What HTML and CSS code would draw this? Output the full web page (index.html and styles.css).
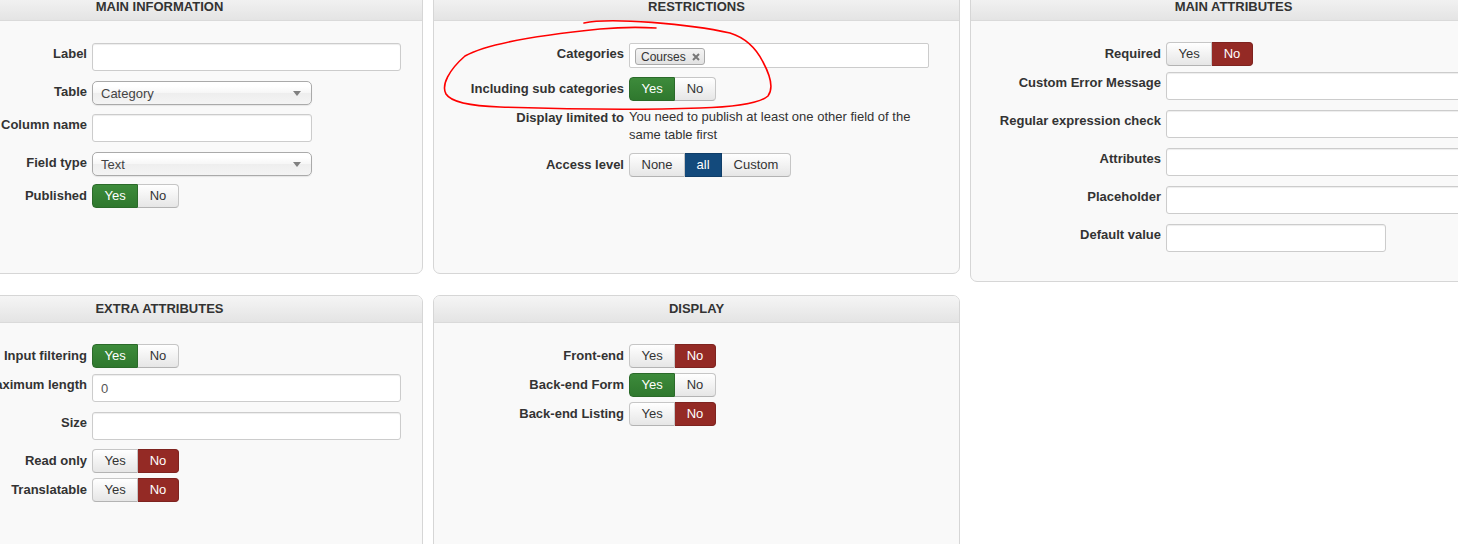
FILE: index.html
```html
<!DOCTYPE html>
<html lang="en">
<head>
    <meta charset="UTF-8">
    <meta name="viewport" content="width=device-width, initial-scale=1.0">
    <title>Field Settings</title>
    <link rel="stylesheet" href="styles.css">
</head>
<body>
    <div class="page">
        <section class="panel">
            <h2 class="panel-head">MAIN INFORMATION</h2>
            <div class="panel-body">
                <div class="row"><label>Label</label><input type="text" class="input-wide"></div>
                <div class="row"><label>Table</label><div class="select"><span>Category</span><i class="caret"></i></div></div>
                <div class="row"><label>Column name</label><input type="text"></div>
                <div class="row"><label>Field type</label><div class="select"><span>Text</span><i class="caret"></i></div></div>
                <div class="row"><label>Published</label><div class="toggle"><span class="yes-on">Yes</span><span>No</span></div></div>
            </div>
        </section>

        <section class="panel">
            <h2 class="panel-head">RESTRICTIONS</h2>
            <div class="panel-body">
                <div class="row">
                    <label>Categories</label>
                    <div class="tags">
                        <span class="tag">Courses
                            <svg class="tag-x" width="8" height="8" viewBox="0 0 8 8"><path d="M1 1L7 7M7 1L1 7"/></svg>
                        </span>
                    </div>
                </div>
                <div class="row"><label>Including sub categories</label><div class="toggle"><span class="yes-on">Yes</span><span>No</span></div></div>
                <div class="row"><label>Display limited to</label><p class="help">You need to publish at least one other field of the same table first</p></div>
                <div class="row"><label>Access level</label><div class="toggle"><span>None</span><span class="pick-on">all</span><span>Custom</span></div></div>
            </div>
            <!-- hand drawn marker around the two first rows -->
            <svg class="marker" viewBox="0 0 527 140">
                <g transform="translate(-433 7)">
                    <path d="M584 23 C 610 17, 690 24, 730 33 C 746 38, 757 50, 763 62 C 770 75, 774 88, 768 96 C 759 104, 735 107, 700 108 C 640 110, 560 109, 500 107 C 470 106, 451 102, 446 94 C 441 85, 449 70, 465 56 C 488 43, 540 35, 600 29 C 622 27, 640 27, 656 28"/>
                </g>
            </svg>
        </section>

        <section class="panel">
            <h2 class="panel-head">MAIN ATTRIBUTES</h2>
            <div class="panel-body">
                <div class="row"><label>Required</label><div class="toggle"><span>Yes</span><span class="no-on">No</span></div></div>
                <div class="row"><label>Custom Error Message</label><input type="text" class="input-long"></div>
                <div class="row"><label>Regular expression check</label><input type="text" class="input-long"></div>
                <div class="row"><label>Attributes</label><input type="text" class="input-long"></div>
                <div class="row"><label>Placeholder</label><input type="text" class="input-long"></div>
                <div class="row"><label>Default value</label><input type="text"></div>
            </div>
        </section>

        <section class="panel">
            <h2 class="panel-head">EXTRA ATTRIBUTES</h2>
            <div class="panel-body">
                <div class="row"><label>Input filtering</label><div class="toggle"><span class="yes-on">Yes</span><span>No</span></div></div>
                <div class="row"><label>Maximum length</label><input type="text" class="input-wide" value="0"></div>
                <div class="row"><label>Size</label><input type="text" class="input-wide"></div>
                <div class="row"><label>Read only</label><div class="toggle"><span>Yes</span><span class="no-on">No</span></div></div>
                <div class="row"><label>Translatable</label><div class="toggle"><span>Yes</span><span class="no-on">No</span></div></div>
            </div>
        </section>

        <section class="panel">
            <h2 class="panel-head">DISPLAY</h2>
            <div class="panel-body">
                <div class="row"><label>Front-end</label><div class="toggle"><span>Yes</span><span class="no-on">No</span></div></div>
                <div class="row"><label>Back-end Form</label><div class="toggle"><span class="yes-on">Yes</span><span>No</span></div></div>
                <div class="row"><label>Back-end Listing</label><div class="toggle"><span>Yes</span><span class="no-on">No</span></div></div>
            </div>
        </section>
    </div>
</body>
</html>
```

FILE: styles.css
```css
* {
    box-sizing: border-box;
}
html, body {
    overflow: hidden;
}
body {
    margin: 0;
    background-color: #fff;
    color: #333;
    font-family: "Liberation Sans", Arial, sans-serif;
    font-size: 13px;
}
/* page is scrolled a bit, so the first column is cut off */
.page {
    display: grid;
    grid-template-columns: repeat(3, 527px);
    column-gap: 10px;
    row-gap: 13px;
    align-items: start;
    margin: -7px 0 0 -104px;
}
.panel {
    position: relative;
    min-height: 281px;
    background-color: #f9f9f9;
    border: 1px solid #d6d6d6;
    border-radius: 7px;
}
.panel-head {
    margin: 0;
    height: 27px;
    line-height: 26px;
    text-align: center;
    font-size: 13px;
    font-weight: bold;
    color: #333;
    background: linear-gradient(#f5f5f5, #e4e4e4);
    border-bottom: 1px solid #dadada;
    border-radius: 6px 6px 0 0;
}
.panel-body {
    padding: 21px 0 20px;
}
.row {
    display: flex;
    align-items: flex-start;
    gap: 5px;
    margin-bottom: 5px;
}
.row > label {
    flex: 0 0 190px;
    padding-top: 3px;
    line-height: 18px;
    text-align: right;
    font-weight: bold;
    white-space: nowrap;
}
input[type="text"] {
    width: 220px;
    height: 28px;
    margin: 1px 0 4px;
    padding: 4px 8px;
    border: 1px solid #ccc;
    border-radius: 3px;
    background-color: #fff;
    box-shadow: inset 0 1px 1px rgba(0, 0, 0, 0.075);
    font: 13px "Liberation Sans", Arial, sans-serif;
    color: #555;
}
.input-wide {
    width: 309px !important;
}
.input-long {
    width: 320px !important;
}
.select {
    display: flex;
    align-items: center;
    width: 220px;
    height: 24px;
    margin: 1px 0 3px;
    padding: 0 8px;
    border: 1px solid #aaa;
    border-radius: 5px;
    background: linear-gradient(#fff 20%, #f6f6f6 50%, #eee 52%, #f4f4f4 100%);
    box-shadow: 0 1px 1px rgba(0, 0, 0, 0.08);
    color: #444;
}
.caret {
    margin-left: auto;
    margin-right: 2px;
    border-left: 4px solid transparent;
    border-right: 4px solid transparent;
    border-top: 5px solid #808080;
}
.tags {
    width: 300px;
    height: 25px;
    margin: 1px 0 4px;
    padding: 4px 5px;
    border: 1px solid #ccc;
    border-radius: 2px;
    background-color: #fff;
}
.tag {
    display: inline-flex;
    align-items: center;
    gap: 6px;
    height: 17px;
    padding: 0 4px 0 5px;
    border: 1px solid #aaa;
    border-radius: 3px;
    background: linear-gradient(#f4f4f4, #e2e2e2);
    font-size: 12px;
    color: #333;
}
.tag-x path {
    stroke: #777;
    stroke-width: 2;
    fill: none;
}
.help {
    width: 300px;
    margin: 0;
    padding: 2px 0 4px;
    line-height: 18px;
}
.toggle {
    display: flex;
}
.toggle span {
    height: 24px;
    line-height: 22px;
    padding: 0 11.5px;
    border: 1px solid #c6c6c6;
    border-bottom-color: #b3b3b3;
    background: linear-gradient(#fff, #e6e6e6);
    color: #333;
}
.toggle span + span {
    border-left: none;
}
.toggle span:first-child {
    border-radius: 4px 0 0 4px;
}
.toggle span:last-child {
    border-radius: 0 4px 4px 0;
}
.toggle .yes-on {
    background: linear-gradient(#3d8b3b, #2f782e);
    border-color: #2b6a2a;
    color: #fff;
}
.toggle .no-on {
    background: #942a25;
    border-color: #7e231f;
    color: #fff;
}
.toggle .pick-on {
    background: #134a7c;
    border-color: #0f3d68;
    color: #fff;
}
.marker {
    position: absolute;
    left: -1px;
    top: -1px;
    width: 527px;
    height: 140px;
    overflow: visible;
    pointer-events: none;
}
.marker path {
    fill: none;
    stroke: #f00;
    stroke-width: 1.6;
    stroke-linecap: round;
}
```
